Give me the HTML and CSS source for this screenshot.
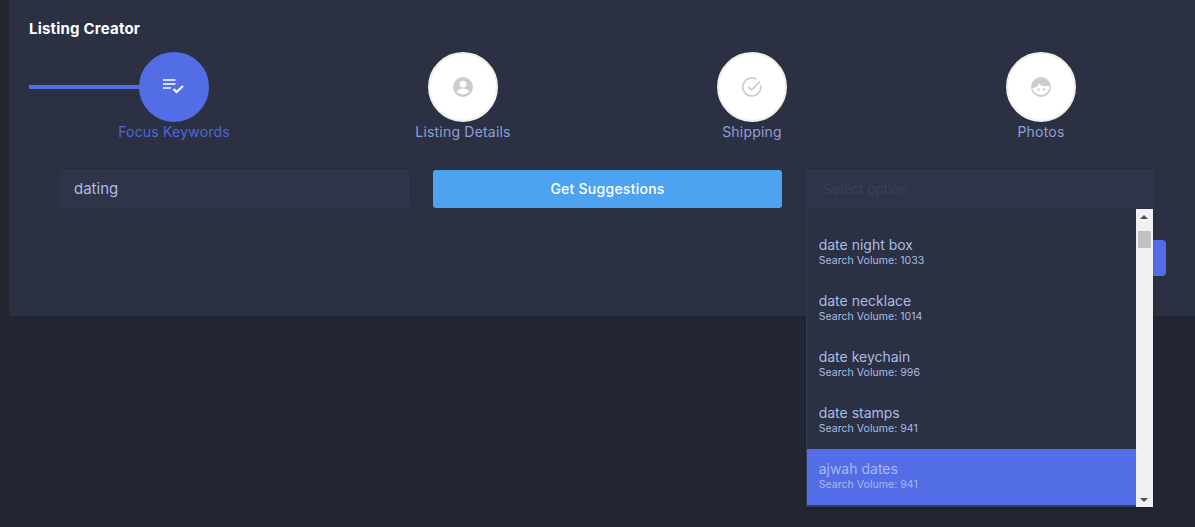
FILE: index.html
```html
<!DOCTYPE html>
<html lang="en">
<head>
<meta charset="utf-8">
<title>Listing Creator</title>
<link rel="stylesheet" href="styles.css">
</head>
<body>
<main class="card">
  <h1 class="title">Listing Creator</h1>
  <div class="stepper">
    <span class="progress"></span>
    <div class="step active">
      <span class="circle">
        <svg width="22" height="16" viewBox="0 0 22 16"><path d="M0 1h12.500M0 5h12.500M0 9h8" stroke="#fff" stroke-width="1.700" fill="none"/><path d="M10.500 10l3 3 6.500-6" stroke="#fff" stroke-width="2" fill="none"/></svg>
      </span>
      <span class="label">Focus Keywords</span>
    </div>
    <div class="step">
      <span class="circle">
        <svg width="20" height="20" viewBox="0 0 20 20"><circle cx="10" cy="10" r="10" fill="#ccc"/><circle cx="10" cy="7.200" r="3.400" fill="#fff"/><path d="M3.600 14.600c1.300-2 3.800-3 6.400-3s5.100 1 6.400 3c-1.400 1.700-3.800 2.800-6.400 2.800s-5-1.100-6.400-2.800z" fill="#fff"/></svg>
      </span>
      <span class="label">Listing Details</span>
    </div>
    <div class="step">
      <span class="circle">
        <svg width="20" height="20" viewBox="0 0 20 20"><path d="M18.700 8.500A9 9 0 1 1 14.500 2.300" stroke="#ccc" stroke-width="1.700" fill="none"/><path d="M6 9.500l3.500 3.500 8.500-8.500" stroke="#ccc" stroke-width="1.700" fill="none"/></svg>
      </span>
      <span class="label">Shipping</span>
    </div>
    <div class="step">
      <span class="circle">
        <svg width="20" height="20" viewBox="0 0 20 20"><circle cx="10" cy="10" r="10" fill="#ccc"/><path d="M1.500 11c2.500 0 5-1.500 7-4.500.5 1 1.300 1.900 2.500 2.200 2.500.5 5.500.5 7.500.3.500 4.500-3.500 9-8.500 9-4.300 0-8-3-8.500-7z" fill="#fff"/><circle cx="7.500" cy="12.500" r="1.200" fill="#ccc"/><circle cx="13" cy="12.500" r="1.200" fill="#ccc"/></svg>
      </span>
      <span class="label">Photos</span>
    </div>
  </div>
  <div class="fields">
    <div class="input">dating</div>
    <button class="suggest" type="button">Get Suggestions</button>
    <div class="select-wrap">
      <div class="select">Select option</div>
      <div class="dropdown">
        <ul class="options">
          <li class="option"><span class="name">date night box</span><span class="volume">Search Volume: 1033</span></li>
          <li class="option"><span class="name">date necklace</span><span class="volume">Search Volume: 1014</span></li>
          <li class="option"><span class="name">date keychain</span><span class="volume">Search Volume: 996</span></li>
          <li class="option"><span class="name">date stamps</span><span class="volume">Search Volume: 941</span></li>
          <li class="option selected"><span class="name">ajwah dates</span><span class="volume">Search Volume: 941</span></li>
        </ul>
        <div class="scrollbar">
          <span class="arrow up"></span>
          <span class="thumb"></span>
          <span class="arrow down"></span>
        </div>
      </div>
    </div>
  </div>
  <div class="actions"><button class="next" type="button">Next</button></div>
</main>
</body>
</html>
```
FILE: styles.css
```css
* { box-sizing: border-box; }
html, body { height: 100%; }
body {
  margin: 0;
  padding: 0 0 0 9px;
  background: #222633;
  font-family: "Inter", "Open Sans", sans-serif;
  overflow: hidden;
}
.card {
  height: 316px;
  padding: 19px 20px 0;
  background: #2b3043;
  border-radius: 0 0 0 4px;
}
.title {
  margin: 0;
  height: 20px;
  font-size: 15px;
  line-height: 20px;
  font-weight: 700;
  color: #fff;
  letter-spacing: 0.2px;
}
.stepper {
  position: relative;
  display: grid;
  grid-template-columns: repeat(4, 289px);
  margin-top: 13px;
  height: 92px;
}
.progress {
  position: absolute;
  left: 0;
  top: 33px;
  width: 120px;
  height: 4px;
  background: #536de6;
}
.step {
  position: relative;
  display: flex;
  flex-direction: column;
  align-items: center;
  width: 70px;
  margin-left: 110px;
}
.circle {
  flex: none;
  display: flex;
  align-items: center;
  justify-content: center;
  width: 70px;
  height: 70px;
  border-radius: 50%;
  background: #fff;
  border: 2px solid #f0eeea;
}
.active .circle { background: #536de6; border-color: #536de6; }
.label {
  white-space: nowrap;
  font-size: 14px;
  line-height: 20px;
  letter-spacing: 0.2px;
  color: #8f9fd4;
}
.active .label { color: #4d68db; }
.fields {
  display: grid;
  grid-template-columns: repeat(3, 348.33px);
  column-gap: 24px;
  margin: 26px 0 0 32px;
}
.input, .select {
  height: 38px;
  padding: 0 12px;
  background: #2f3448;
  border: 1px solid #323850;
  border-radius: 3px;
  font-size: 15px;
  line-height: 36px;
  color: #a8bde8;
}
.select { padding-left: 17px; font-size: 13.500px; color: #3a4259; }
.suggest {
  height: 38px;
  padding: 0 0 2px;
  border: 0;
  border-radius: 3px;
  background: #4da3f0;
  color: #fff;
  font: 500 14px "Inter", sans-serif;
  letter-spacing: 0.25px;
}
.select-wrap { position: relative; }
.dropdown {
  position: absolute;
  z-index: 2;
  left: 0;
  top: 39px;
  width: 347px;
  height: 298px;
  display: flex;
  background: #2b3043;
  border-left: 1px solid #363c52;
  border-bottom: 2px solid #363c52;
  box-shadow: 0 1px 2px rgba(0, 0, 0, .2);
}
.options {
  flex: 1;
  margin: 0;
  padding: 16px 0 0;
  list-style: none;
}
.option {
  display: flex;
  flex-direction: column;
  height: 56px;
  padding: 10px 12px 0;
  color: #a8bde8;
}
.option.selected { background: #536de6; color: #a6b8ee; }
.name { font-size: 14px; line-height: 19px; }
.volume { font-size: 10.500px; line-height: 14px; letter-spacing: 0.05px; }
.scrollbar {
  position: relative;
  flex: none;
  width: 17px;
  height: 298px;
  background: #f1f1f1;
}
.arrow {
  position: absolute;
  left: 4.500px;
  width: 0;
  height: 0;
  border-left: 4px solid transparent;
  border-right: 4px solid transparent;
}
.arrow.up { top: 6px; border-bottom: 4px solid #505050; }
.arrow.down { bottom: 5px; border-top: 4px solid #505050; }
.thumb {
  position: absolute;
  left: 2px;
  top: 22px;
  width: 13px;
  height: 17px;
  background: #c1c1c1;
}
.actions {
  display: flex;
  justify-content: flex-end;
  margin-top: 32px;
}
.next {
  width: 100px;
  height: 36px;
  margin-right: 9px;
  border: 0;
  border-radius: 4px;
  background: #536de6;
  color: #fff;
  font: 500 14px "Inter", sans-serif;
}
```
